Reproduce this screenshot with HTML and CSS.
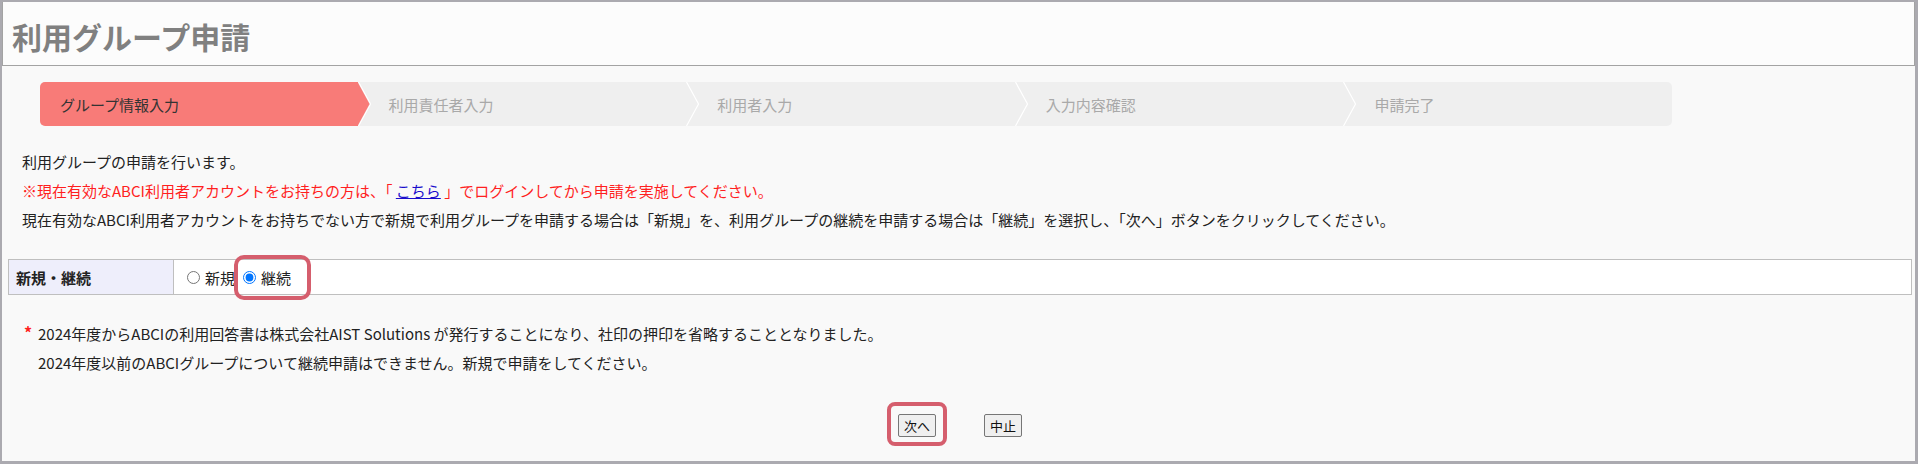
FILE: index.html
```html
<!DOCTYPE html>
<html lang="ja">
<head>
<meta charset="utf-8">
<title>利用グループ申請</title>
<link rel="stylesheet" href="styles.css">
</head>
<body>
<div class="frame">
  <header class="header">
    <h1 class="title">利用グループ申請</h1>
  </header>
  <main class="main">
    <div class="steps">
      <div class="step step-active"><span>グループ情報入力</span></div>
      <div class="step"><svg class="sep" width="14" height="44" viewBox="0 0 14 44"><polyline points="0.5,0 12.5,22 0.5,44" fill="none" stroke="#ffffff" stroke-width="1.2"/></svg><span>利用責任者入力</span></div>
      <div class="step"><svg class="sep" width="14" height="44" viewBox="0 0 14 44"><polyline points="0.5,0 12.5,22 0.5,44" fill="none" stroke="#ffffff" stroke-width="1.2"/></svg><span>利用者入力</span></div>
      <div class="step"><svg class="sep" width="14" height="44" viewBox="0 0 14 44"><polyline points="0.5,0 12.5,22 0.5,44" fill="none" stroke="#ffffff" stroke-width="1.2"/></svg><span>入力内容確認</span></div>
      <div class="step"><svg class="sep" width="14" height="44" viewBox="0 0 14 44"><polyline points="0.5,0 12.5,22 0.5,44" fill="none" stroke="#ffffff" stroke-width="1.2"/></svg><span>申請完了</span></div>
    </div>

    <div class="intro">
      <p class="line">利用グループの申請を行います。</p>
      <p class="line line-red">※現在有効なABCI利用者アカウントをお持ちの方は、「 <a href="#" class="link">こちら</a> 」でログインしてから申請を実施してください。</p>
      <p class="line">現在有効なABCI利用者アカウントをお持ちでない方で新規で利用グループを申請する場合は「新規」を、利用グループの継続を申請する場合は「継続」を選択し、「次へ」ボタンをクリックしてください。</p>
    </div>

    <div class="form-table">
      <div class="cell-label">新規・継続</div>
      <div class="cell-value">
        <label class="opt"><input type="radio" name="kind" class="radio">新規</label>
        <label class="opt"><input type="radio" name="kind" class="radio" checked>継続</label>
      </div>
      <div class="mark mark-radio"></div>
    </div>

    <div class="note">
      <span class="star">*</span>
      <div class="note-lines">
        <p class="line">2024年度からABCIの利用回答書は株式会社AIST Solutions が発行することになり、社印の押印を省略することとなりました。</p>
        <p class="line">2024年度以前のABCIグループについて継続申請はできません。新規で申請をしてください。</p>
      </div>
    </div>

    <div class="buttons">
      <span class="btn-wrap"><button class="btn" type="button">次へ</button><span class="mark mark-btn"></span></span>
      <span class="btn-wrap"><button class="btn" type="button">中止</button></span>
    </div>
  </main>
</div>
</body>
</html>
```

FILE: styles.css
```css
html, body {
  margin: 0;
  padding: 0;
}

body {
  font-family: "Noto Sans CJK JP", "Noto Sans", sans-serif;
  color: #222222;
  background: #f9f9f9;
}

.frame {
  box-sizing: border-box;
  width: 1918px;
  height: 464px;
  border-style: solid;
  border-color: #abaab0;
  border-width: 2px 3px 3px 2px;
  background: #f9f9f9;
  overflow: hidden;
}

.header {
  box-sizing: border-box;
  height: 64px;
  border: 1px solid #a3a3a3;
  border-top: none;
  background: #fcfcfc;
  padding-left: 9px;
  display: flex;
  align-items: center;
}

.title {
  margin: 0;
  font-size: 30px;
  font-weight: 700;
  color: #808080;
  line-height: 1;
  padding-top: 4px;
}

.main {
  padding: 0 3px 0 6px;
}

.steps {
  display: flex;
  width: 1632px;
  height: 44px;
  margin: 16px 0 0 32px;
  background: #efefef;
  border-radius: 5px;
  overflow: hidden;
}

.step {
  position: relative;
  flex: 1 1 0;
  display: flex;
  align-items: center;
  padding-left: 31px;
  font-size: 15px;
  color: #a9a9a9;
  white-space: nowrap;
}

.sep {
  position: absolute;
  left: 0;
  top: 0;
}

.step-active {
  background: #f87b78;
  color: #333333;
  padding-left: 20px;
  z-index: 2;
}

.step-active::after {
  content: "";
  position: absolute;
  right: -12px;
  top: 0;
  width: 12px;
  height: 44px;
  background: #f87b78;
  clip-path: polygon(0 0, 100% 50%, 0 100%);
}

.intro {
  margin: 21px 0 0 14px;
}

.line {
  margin: 0;
  font-size: 15px;
  line-height: 29px;
  white-space: nowrap;
}

.line-red {
  color: #ff1f1f;
}

.link {
  color: #1a0dcc;
  text-decoration: underline;
}

.form-table {
  position: relative;
  display: flex;
  height: 36px;
  box-sizing: border-box;
  margin-top: 25px;
  border: 1px solid #bfbfbf;
  background: #ffffff;
}

.cell-label {
  width: 165px;
  box-sizing: border-box;
  flex: none;
  background: #eeeefb;
  border-right: 1px solid #bfbfbf;
  display: flex;
  align-items: center;
  padding-left: 7px;
  font-size: 15px;
  font-weight: 700;
  color: #222222;
}

.cell-value {
  display: flex;
  align-items: center;
  padding-left: 13px;
  font-size: 15px;
}

.opt {
  display: inline-flex;
  align-items: center;
}

.opt + .opt {
  margin-left: 8px;
}

.radio {
  width: 13px;
  height: 13px;
  margin: 0 5px 0 0;
}

.mark {
  position: absolute;
  box-sizing: border-box;
  border: 4px solid #d55e6d;
  border-radius: 10px;
  pointer-events: none;
}

.mark-radio {
  left: 225px;
  top: -5px;
  width: 77px;
  height: 45px;
}

.note {
  display: flex;
  margin: 24px 0 0 16px;
}

.star {
  width: 14px;
  flex: none;
  color: #ff1f1f;
  font-size: 16px;
  line-height: 26px;
  font-weight: 700;
}

.buttons {
  display: flex;
  justify-content: center;
  gap: 48px;
  margin-top: 37px;
}

.btn-wrap {
  position: relative;
  display: inline-block;
}

.btn {
  display: block;
  box-sizing: border-box;
  height: 23px;
  padding: 0 5px;
  border: 1px solid #767676;
  border-radius: 2px;
  background: #efefef;
  font-family: "Noto Sans CJK JP", sans-serif;
  font-size: 13px;
  line-height: 21px;
  color: #111111;
}

.mark-btn {
  left: -11px;
  top: -12px;
  width: 60px;
  height: 44px;
  border-radius: 8px;
}
```
